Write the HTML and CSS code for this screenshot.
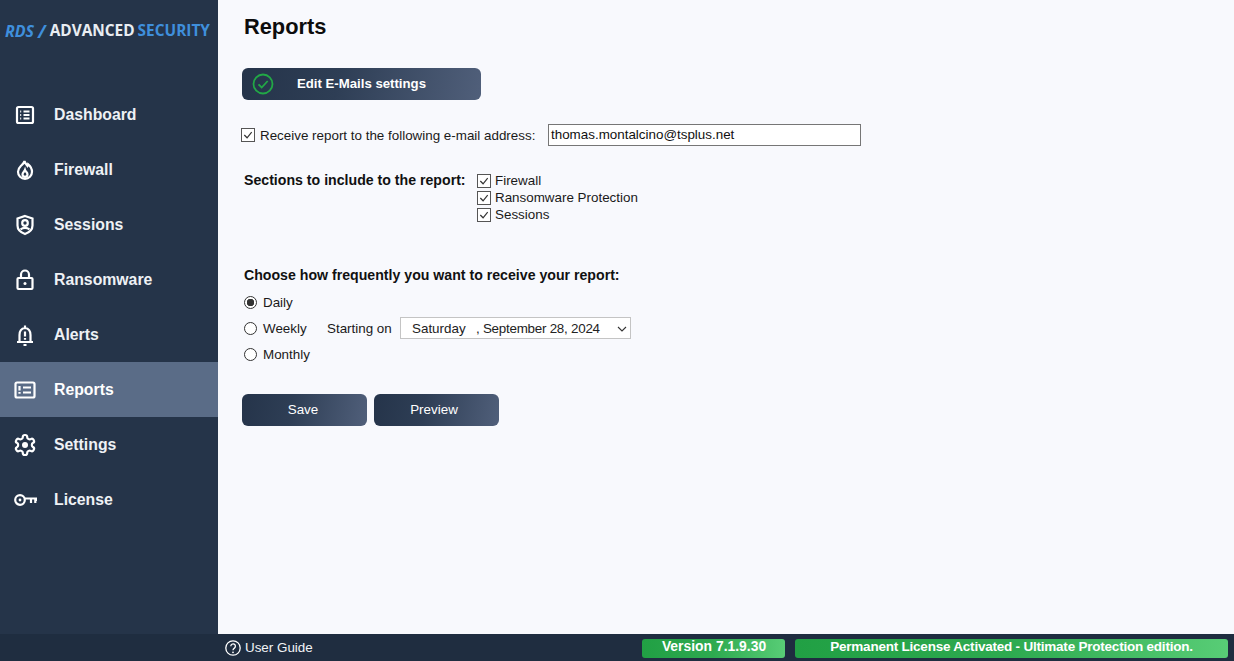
FILE: index.html
```html
<!DOCTYPE html>
<html lang="en">
<head>
<meta charset="utf-8">
<title>Reports</title>
<link rel="stylesheet" href="styles.css">
</head>
<body>
<div class="app">
  <aside class="sidebar">
    <div class="logo"><span class="logo-rds">RDS</span><span class="logo-slash">/</span><span class="logo-adv">ADVANCED</span><span class="logo-sec">SECURITY</span></div>
    <nav class="nav">
      <div class="nav-item">
        <svg class="nav-icon" viewBox="0 0 24 24"><rect x="4" y="4" width="16" height="16" rx="1.5"/><path d="M10.5 8.5h6M10.5 12h6M10.5 15.5h6M7.2 8.5h1M7.2 12h1M7.2 15.5h1"/></svg>
        <span>Dashboard</span>
      </div>
      <div class="nav-item">
        <svg class="nav-icon" viewBox="0 0 24 24"><path d="M11.5 3c.5 2.500 2 3.500 3 5 .4-.6.6-1 .7-1.700 2 1.700 3.800 4.500 3.800 7.500a7 7 0 0 1-14 0c0-2.800 1.500-4.500 3-6 1.600-1.500 3.200-2.700 3.500-4.800z"/><path d="M12 12c.4 1.300 2.500 2.200 2.500 4.300a2.500 2.500 0 0 1-5 0c0-1.800 1.900-2.700 2.500-4.300z"/></svg>
        <span>Firewall</span>
      </div>
      <div class="nav-item">
        <svg class="nav-icon" viewBox="0 0 24 24"><path d="M12 3l7.500 2.500v7c0 4.200-3.200 7-7.500 8.500-4.300-1.500-7.500-4.300-7.500-8.500v-7z"/><circle cx="12" cy="10" r="2.800"/><path d="M7.500 16.500c2.500-2.300 6.500-2.300 9 0"/></svg>
        <span>Sessions</span>
      </div>
      <div class="nav-item">
        <svg class="nav-icon" viewBox="0 0 24 24"><rect x="4.5" y="10" width="15" height="11" rx="1"/><path d="M8 10V6.500a4 4 0 0 1 8 0V10"/><circle class="dot" cx="12" cy="15.500" r="1.500"/></svg>
        <span>Ransomware</span>
      </div>
      <div class="nav-item">
        <svg class="nav-icon" viewBox="0 0 24 24"><path d="M4 19h16M6.500 19v-7c0-4 2-6.500 5.500-7 3.500.5 5.500 3 5.500 7v7M12 2.500v2.500M10.500 22h3"/><path d="M12 8.500v5M12 15v1.800"/></svg>
        <span>Alerts</span>
      </div>
      <div class="nav-item active">
        <svg class="nav-icon" viewBox="0 0 24 24"><rect x="2.5" y="4.500" width="19" height="15" rx="1.500"/><path d="M6.500 8v4.500M6.500 14v1.800M10 9.500h8M10 14.500h8"/></svg>
        <span>Reports</span>
      </div>
      <div class="nav-item">
        <svg class="nav-icon" viewBox="0 0 24 24"><path d="M12.220 2h-.44a2 2 0 0 0-2 2v.18a2 2 0 0 1-1 1.730l-.43.25a2 2 0 0 1-2 0l-.15-.08a2 2 0 0 0-2.730.73l-.22.38a2 2 0 0 0 .73 2.730l.15.1a2 2 0 0 1 1 1.720v.51a2 2 0 0 1-1 1.740l-.15.09a2 2 0 0 0-.73 2.730l.22.38a2 2 0 0 0 2.730.73l.15-.08a2 2 0 0 1 2 0l.43.25a2 2 0 0 1 1 1.730V20a2 2 0 0 0 2 2h.44a2 2 0 0 0 2-2v-.18a2 2 0 0 1 1-1.730l.43-.25a2 2 0 0 1 2 0l.15.08a2 2 0 0 0 2.730-.73l.22-.39a2 2 0 0 0-.73-2.730l-.15-.08a2 2 0 0 1-1-1.740v-.5a2 2 0 0 1 1-1.740l.15-.09a2 2 0 0 0 .73-2.730l-.22-.38a2 2 0 0 0-2.730-.73l-.15.08a2 2 0 0 1-2 0l-.43-.25a2 2 0 0 1-1-1.730V4a2 2 0 0 0-2-2z"/><circle class="dot" cx="12" cy="12" r="3"/></svg>
        <span>Settings</span>
      </div>
      <div class="nav-item">
        <svg class="nav-icon" viewBox="0 0 24 24"><circle cx="7" cy="12" r="4.800"/><circle class="dot" cx="7" cy="12" r="1.400"/><path d="M11.800 10.500h11.700V13M18 10.500V15M22.300 10.500V15"/></svg>
        <span>License</span>
      </div>
    </nav>
  </aside>
  <main class="content">
    <h1 class="title">Reports</h1>
    <div class="btn btn-edit">
      <svg class="ok-icon" viewBox="0 0 22 22"><circle cx="11" cy="11" r="9.500"/><path d="M6.500 11.300l3.200 3.200 6-6.500"/></svg>
      <span>Edit E-Mails settings</span>
    </div>
    <div class="email-row">
      <span class="check"><svg viewBox="0 0 13 13"><path d="M2.500 6.500l3 3 5-6"/></svg></span>
      <span class="email-label">Receive report to the following e-mail address:</span>
      <div class="email-input">thomas.montalcino@tsplus.net</div>
    </div>
    <div class="sections">
      <div class="strong sections-label">Sections to include to the report:</div>
      <div class="sections-list">
        <div class="sec-item"><span class="check"><svg viewBox="0 0 13 13"><path d="M2.500 6.500l3 3 5-6"/></svg></span><span>Firewall</span></div>
        <div class="sec-item"><span class="check"><svg viewBox="0 0 13 13"><path d="M2.500 6.500l3 3 5-6"/></svg></span><span>Ransomware Protection</span></div>
        <div class="sec-item"><span class="check"><svg viewBox="0 0 13 13"><path d="M2.500 6.500l3 3 5-6"/></svg></span><span>Sessions</span></div>
      </div>
    </div>
    <div class="strong freq-label">Choose how frequently you want to receive your report:</div>
    <div class="freq">
      <div class="freq-row"><span class="radio on"></span><span>Daily</span></div>
      <div class="freq-row">
        <span class="radio"></span><span class="weekly">Weekly</span><span class="starting">Starting on</span>
        <div class="date"><span class="date-day">Saturday</span><span class="date-rest">, September 28, 2024</span>
          <svg class="chev" viewBox="0 0 10 6"><path d="M1 1l4 4 4-4"/></svg>
        </div>
      </div>
      <div class="freq-row"><span class="radio"></span><span>Monthly</span></div>
    </div>
    <div class="actions">
      <div class="btn btn-action">Save</div>
      <div class="btn btn-action">Preview</div>
    </div>
  </main>
</div>
<footer class="footer">
  <div class="guide">
    <svg class="help" viewBox="0 0 16 16"><circle cx="8" cy="8" r="7.200"/><path d="M5.800 6.200a2.300 2.300 0 1 1 3.600 1.900c-.9.600-1.400 1-1.400 2.100"/><circle class="help-dot" cx="8" cy="12.300" r=".9"/></svg>
    <span>User Guide</span>
  </div>
  <div class="pill pill-version">Version 7.1.9.30</div>
  <div class="pill pill-license">Permanent License Activated - Ultimate Protection edition.</div>
</footer>
</body>
</html>
```
FILE: styles.css
```css
* { box-sizing: border-box; }
html, body { margin: 0; height: 100%; }
body {
  width: 1234px;
  height: 661px;
  overflow: hidden;
  display: flex;
  flex-direction: column;
  font-family: "Liberation Sans", Arial, sans-serif;
  font-size: 13.4px;
  color: #1a1a1a;
  background: #f8f9fd;
}
.app { flex: 0 0 634px; display: flex; }

.sidebar { flex: 0 0 218px; background: #253449; color: #f4f6f8; }
.logo {
  height: 62px;
  padding-left: 5px;
  display: flex;
  align-items: center;
  font-family: "Open Sans", sans-serif;
  font-size: 15.4px;
  font-weight: 700;
  line-height: 18px;
  white-space: nowrap;
  color: #e9edf2;
}
.logo-rds { color: #3f8fdc; font-style: italic; font-size: 16px; }
.logo-slash { color: #3f8fdc; margin: 0 4px; font-style: italic; font-size: 18px; }
.logo-sec { color: #3f8fdc; margin-left: 3px; }
.nav { margin-top: 25px; }
.nav-item {
  height: 55px;
  display: flex;
  align-items: center;
  padding-left: 13px;
  font-size: 15.8px;
  font-weight: 700;
  color: #eef1f5;
}
.nav-item.active { background: #5a6c87; color: #fff; }
.nav-icon {
  flex: 0 0 24px;
  width: 24px;
  height: 24px;
  margin-right: 17px;
  fill: none;
  stroke: #fff;
  stroke-width: 2.2;
}
.nav-icon .dot { fill: #fff; stroke: none; }

.content { flex: 1; padding-left: 24px; }
.title {
  margin: 0 0 0 2px;
  height: 54px;
  padding-top: 13px;
  font-size: 21.8px;
  line-height: 28px;
  font-weight: 700;
  color: #0d0d0d;
}
.btn {
  display: flex;
  align-items: center;
  height: 32px;
  border-radius: 6px;
  background: linear-gradient(100deg, #25344a 0%, #2e3e55 40%, #505f7a 100%);
  color: #fff;
}
.btn-edit {
  margin-top: 14px;
  width: 239px;
  padding-left: 10px;
  font-size: 13.2px;
  font-weight: 700;
}
.btn-edit span { margin-top: -2px; }
.ok-icon {
  width: 22px;
  height: 22px;
  margin-right: 23px;
  fill: none;
  stroke: #22a846;
  stroke-width: 1.8;
}
.email-row {
  margin-top: 24px;
  height: 22px;
  display: flex;
  align-items: center;
  margin-left: -1px;
}
.check {
  flex: 0 0 14px;
  width: 14px;
  height: 14px;
  border: 1px solid #555;
  background: #fff;
  display: block;
}
.check svg {
  display: block;
  width: 12px;
  height: 12px;
  fill: none;
  stroke: #333;
  stroke-width: 1.3;
}
.email-label { margin-left: 5px; width: 288px; white-space: nowrap; }
.email-input {
  width: 313px;
  height: 22px;
  border: 1px solid #767676;
  background: #fff;
  padding-left: 2px;
  line-height: 20px;
  color: #111;
}
.strong { font-weight: 700; font-size: 14.15px; color: #111; }
.sections { margin: 26px 0 0 2px; display: flex; }
.sections-label { width: 233px; line-height: 16px; }
.sections-list { display: flex; flex-direction: column; }
.sec-item { height: 17px; display: flex; align-items: center; gap: 4px; }
.freq-label { margin: 44px 0 0 2px; line-height: 17px; }
.freq { margin: 5px 0 0 2px; }
.freq-row { height: 26px; display: flex; align-items: center; }
.radio {
  flex: 0 0 13px;
  width: 13px;
  height: 13px;
  margin-right: 6px;
  border: 1px solid #333;
  border-radius: 50%;
  background: #fff;
}
.radio.on { background: radial-gradient(circle, #333 0 3.5px, #fff 4px); }
.weekly { width: 64px; }
.starting { width: 73px; }
.date {
  position: relative;
  width: 231px;
  height: 22px;
  border: 1px solid #c4c4c4;
  background: #fff;
  display: flex;
  align-items: center;
  padding-left: 11px;
  white-space: nowrap;
  color: #222;
}
.date-day { width: 64px; }
.date-rest { letter-spacing: -.25px; }
.chev {
  position: absolute;
  right: 3px;
  top: 8px;
  width: 10px;
  height: 6px;
  fill: none;
  stroke: #333;
  stroke-width: 1.1;
}
.actions { margin-top: 27px; display: flex; gap: 7px; }
.btn-action { width: 125px; justify-content: center; padding-bottom: 2px; }
.btn-action:first-child { padding-right: 3px; }
.btn-action:last-child { padding-right: 5px; }

.footer {
  flex: 0 0 27px;
  display: flex;
  align-items: center;
  padding-right: 6px;
  background: #1f2d40;
  color: #f2f4f7;
}
.guide { flex: 1; padding-left: 225px; display: flex; align-items: center; gap: 4px; }
.help { width: 16px; height: 16px; flex: 0 0 16px; fill: none; stroke: #fff; stroke-width: 1.3; }
.help .help-dot { fill: #fff; stroke: none; }
.pill {
  height: 19px;
  margin-top: 1px;
  border-radius: 3px;
  background: linear-gradient(90deg, #21a044 0%, #2eaa50 50%, #58cd76 100%);
  color: #fff;
  font-weight: 700;
  font-size: 13.9px;
  line-height: 15px;
  text-align: center;
}
.pill-version { flex: 0 0 143px; padding-left: 1px; }
.pill-license { flex: 0 0 433px; margin-left: 10px; font-size: 13.5px; letter-spacing: -.22px; }
```
